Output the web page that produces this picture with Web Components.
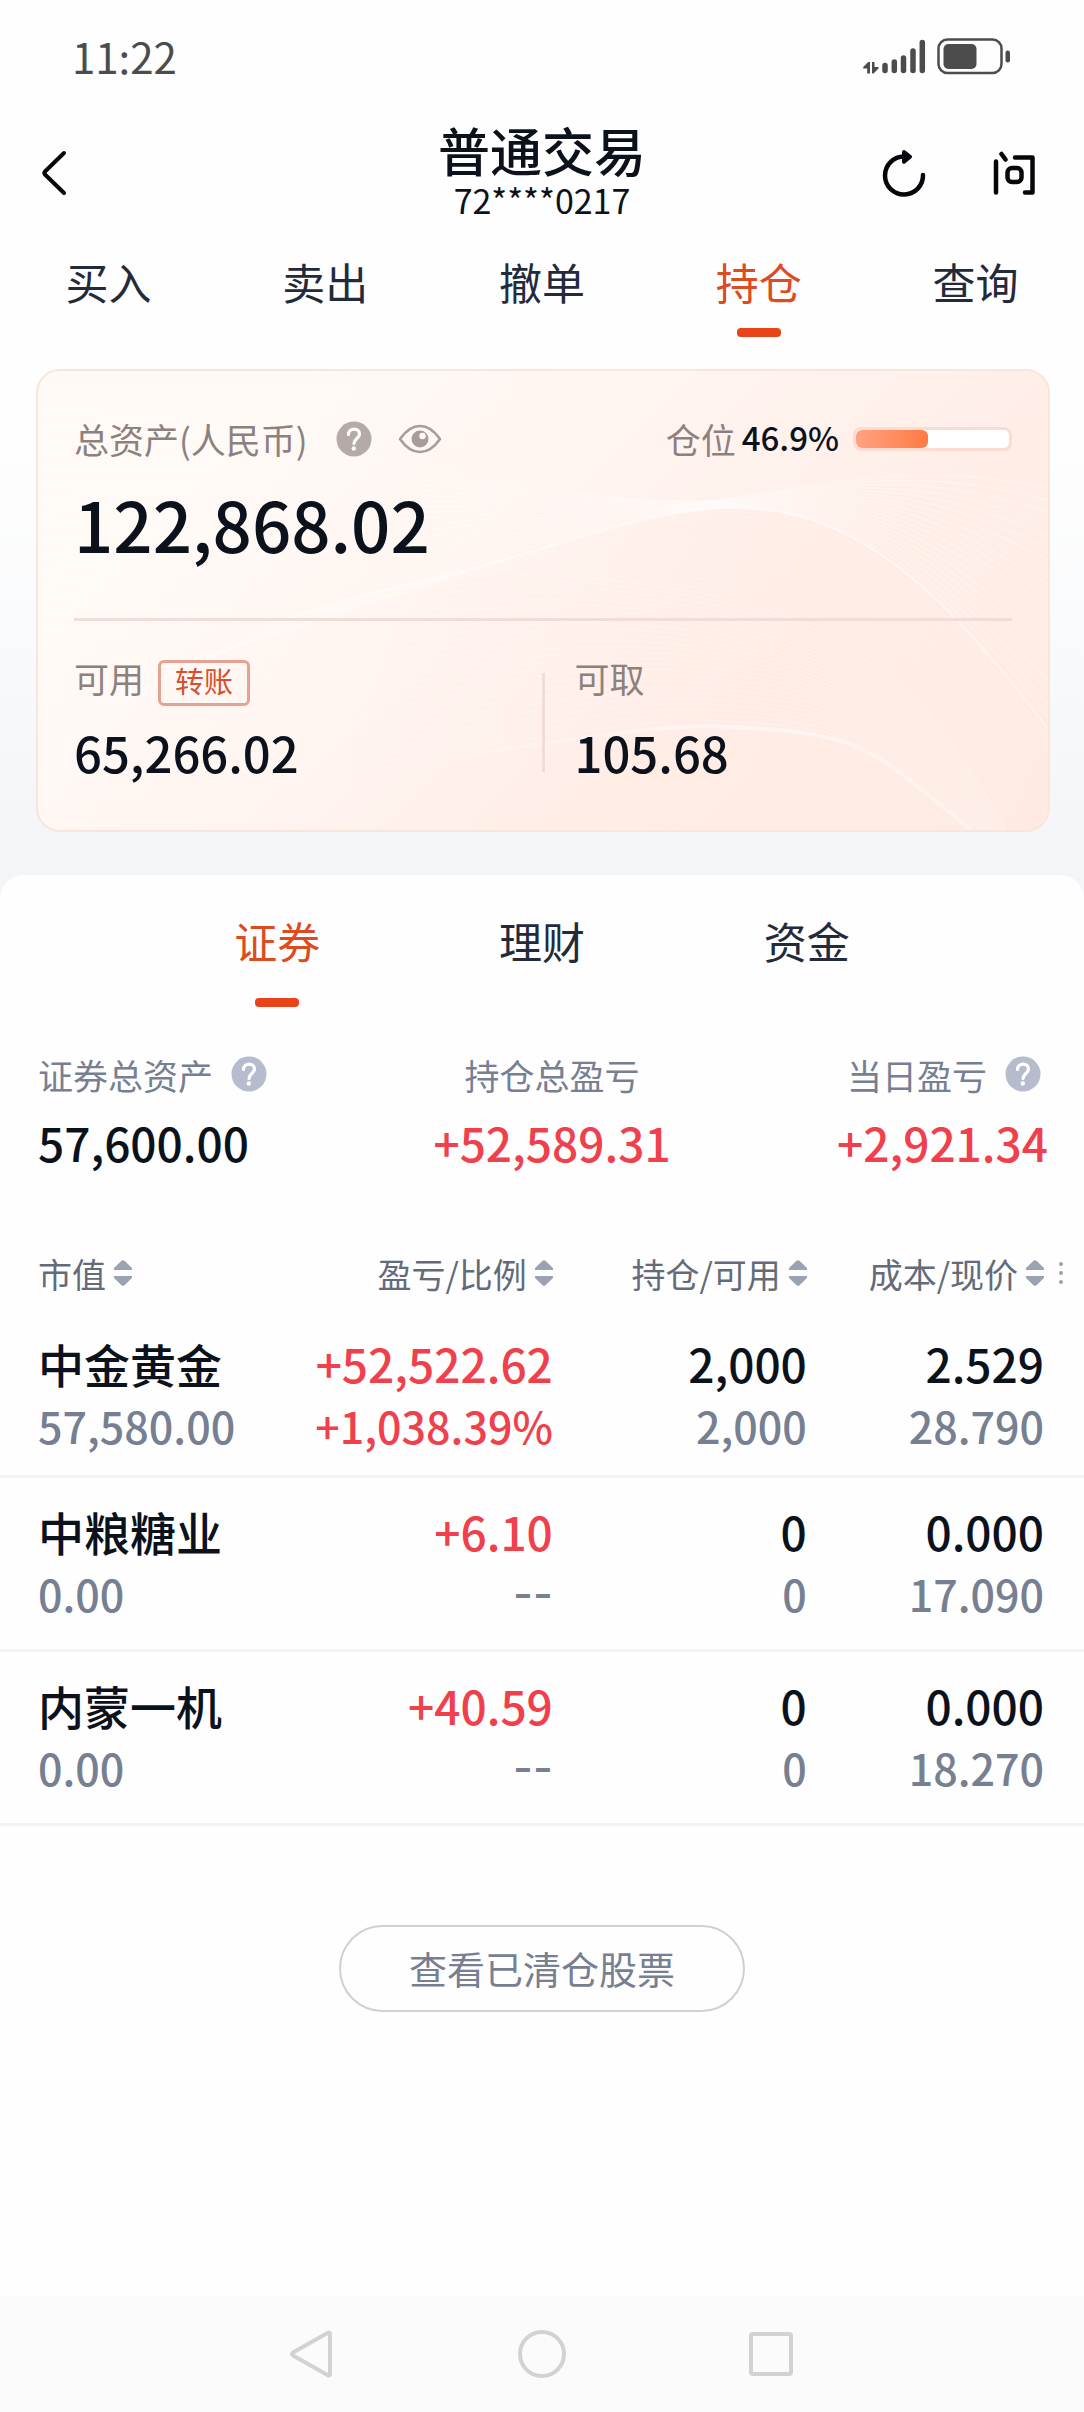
<!DOCTYPE html>
<html lang="zh-CN">
<head>
<meta charset="UTF-8">
<meta name="viewport" content="width=device-width, initial-scale=1">
<title>普通交易</title>
<style>
  body {
    margin: 0;
    font-family: "Noto Sans CJK SC", "Noto Sans", sans-serif;
    color: #0c121c;
    background: #fefefe;
    --accent: #e9431a;
    --accent-text: #dc4b22;
    --rise: #ef404c;
    --muted: #777f92;
  }
</style>
</head>
<body>
<trade-page>
  <status-bar time="11:22"></status-bar>
  <page-header account="72****0217">普通交易</page-header>
  <tab-bar class="main" tabs="买入,卖出,撤单,持仓,查询" active="持仓"></tab-bar>
  <asset-card total="122,868.02" available="65,266.02" withdrawable="105.68" position="46.9"></asset-card>
  <holdings-panel slot="panel">
    <tab-bar class="sub" tabs="证券,理财,资金" active="证券"></tab-bar>
    <asset-summary></asset-summary>
    <holdings-table></holdings-table>
    <pill-button>查看已清仓股票</pill-button>
  </holdings-panel>
  <system-nav slot="nav"></system-nav>
</trade-page>

<script>
class TradePage extends HTMLElement {
  constructor() {
    super();
    this.attachShadow({ mode: "open" });
  }

  connectedCallback() {
    this.shadowRoot.innerHTML = `
    <style>
      :host {
        display: flex;
        flex-direction: column;
        min-height: 100vh;
        background: linear-gradient(#fefefe 440px, #fafbfc 600px, #f4f5f9 840px);
      }

      main {
        flex: 1;
        display: flex;
        flex-direction: column;
      }
    </style>
    <slot></slot>
    <main><slot name="panel"></slot></main>
    <slot name="nav"></slot>
    `;
  }
}

class StatusBar extends HTMLElement {
  constructor() {
    super();
    this.attachShadow({ mode: "open" });
  }

  connectedCallback() {
    this.shadowRoot.innerHTML = `
    <style>
      :host {
        display: flex;
        align-items: center;
        justify-content: space-between;
        height: 111px;
        padding: 0 72px;
        color: #4c4c4c;
        font-size: 42px;
      }

      svg {
        display: block;
      }
    </style>
    <span>${this.getAttribute("time")}</span>
    <svg width="150" height="38" viewBox="862 36 150 38" fill="#4c4c4c" aria-hidden="true">
      <path d="M870 61v11.500h-2.800v-5h-4v-1.500l5-5zM872 61h2.500v5h4v1.500l-5 5H872z"/>
      <g stroke="#4c4c4c" stroke-width="5.500" stroke-linecap="round">
        <path d="M885 64.500v5M894.300 61v8.500M903.500 57v12.500M913 50v19.500M922.300 41.500v28"/>
      </g>
      <rect x="938.500" y="38.500" width="63" height="33.500" rx="9" fill="none" stroke="#4c4c4c" stroke-width="2.500"/>
      <rect x="943.500" y="43" width="33" height="25" rx="5"/>
      <rect x="1005.500" y="49.500" width="4.500" height="12" rx="2.200"/>
    </svg>
    `;
  }
}

class PageHeader extends HTMLElement {
  constructor() {
    super();
    this.attachShadow({ mode: "open" });
  }

  connectedCallback() {
    this.shadowRoot.innerHTML = `
    <style>
      :host {
        display: grid;
        grid-template-columns: 1fr auto 1fr;
        align-items: center;
        padding: 0 40px;
      }

      .title {
        padding: 7px 0 17px;
        text-align: center;
      }

      h1 {
        margin: 0;
        font-size: 52px;
        font-weight: 500;
        line-height: 64px;
      }

      p {
        margin: 0;
        font-size: 34px;
        line-height: 35px;
      }

      .actions {
        display: flex;
        justify-content: flex-end;
        gap: 64px;
        padding-right: 7px;
      }

      button {
        justify-self: start;
        padding: 0;
        border: 0;
        background: none;
      }

      svg {
        display: block;
        fill: none;
        stroke: #05070b;
        stroke-linecap: round;
        stroke-linejoin: round;
      }
    </style>
    <button aria-label="返回">
      <svg width="28" height="46" viewBox="0 0 28 46" stroke-width="4"><path d="M24 3L5 21.500q-1.500 1.500 0 3L24 43"/></svg>
    </button>
    <div class="title">
      <h1><slot></slot></h1>
      <p>${this.getAttribute("account")}</p>
    </div>
    <div class="actions">
      <button aria-label="刷新">
        <svg width="46" height="48" viewBox="881 149 46 48">
          <path d="M923 175A19 19 0 1 1 904 156.500" stroke-width="4.500"/>
          <path d="M904 152l6 4.700-6 5z" stroke-width="4" fill="#05070b"/>
        </svg>
      </button>
      <button aria-label="问答">
        <svg width="46" height="48" viewBox="991 149 46 48" stroke-width="4.500">
          <path d="M996 161.500v31M1001.500 154l4 5.500M1015 157.500h17.500v35h-7.500"/>
          <rect x="1007.500" y="168" width="14" height="14" rx="4.500"/>
        </svg>
      </button>
    </div>
    `;
  }
}

class TabBar extends HTMLElement {
  constructor() {
    super();
    this.attachShadow({ mode: "open" });
  }

  connectedCallback() {
    const active = this.getAttribute("active");
    const tabs = this.getAttribute("tabs").split(",");
    this.shadowRoot.innerHTML = `
    <style>
      :host {
        display: block;
      }

      nav {
        display: flex;
      }

      :host(.main) nav {
        padding: 19px 0 32px;
      }

      :host(.sub) nav {
        padding: 37px 145px 47px;
      }

      button {
        flex: 1;
        display: flex;
        flex-direction: column;
        align-items: center;
        gap: 19px;
        padding: 0;
        border: 0;
        background: none;
        color: #232b3b;
        font: inherit;
        font-size: 43px;
        line-height: 56px;
      }

      :host(.sub) button {
        gap: 30px;
      }

      button::after {
        content: "";
        width: 44px;
        height: 9px;
        border-radius: 4px;
      }

      button[aria-current] {
        color: var(--accent-text);
      }

      button[aria-current]::after {
        background: var(--accent);
      }
    </style>
    <nav>
      ${tabs.map((tab) => `<button${tab === active ? ' aria-current="page"' : ""}>${tab}</button>`).join("")}
    </nav>
    `;
  }
}

class HelpIcon extends HTMLElement {
  constructor() {
    super();
    this.attachShadow({ mode: "open" });
  }

  connectedCallback() {
    this.shadowRoot.innerHTML = `
    <style>
      :host {
        display: block;
        color: #b6bbcd;
      }

      button {
        display: block;
        padding: 0;
        border: 0;
        background: none;
        color: inherit;
      }

      svg {
        display: block;
      }
    </style>
    <button aria-label="说明">
      <svg width="36" height="36" viewBox="0 0 36 36">
        <circle cx="18" cy="18" r="17.500" fill="currentColor"/>
        <path d="M12.500 13.500c0-7 11-7 11-.5 0 4.500-5.500 4.500-5.500 9.500" fill="none" stroke="#fff" stroke-width="3.200" stroke-linecap="round"/>
        <circle cx="17.800" cy="27.500" r="2.200" fill="#fff"/>
      </svg>
    </button>
    `;
  }
}

class AssetCard extends HTMLElement {
  constructor() {
    super();
    this.attachShadow({ mode: "open" });
  }

  // Blend two cubic waves step by step into a family of fine lines
  waves(from, to, count) {
    let d = "";
    for (let i = 0; i <= count; i++) {
      const p = from.map((v, k) => Math.round((v + (to[k] - v) * (i / count)) * 10) / 10);
      d += `M${p[0]} ${p[1]}C${p.slice(2, 8).join(" ")}S${p.slice(8).join(" ")}`;
    }
    return d;
  }

  connectedCallback() {
    const ridge = [0, 335, 430, 215, 580, 138, 698, 138, 900, 210, 1014, 361];
    const crest = [0, 40, 300, 60, 560, 150, 698, 128, 900, 95, 1014, 118];
    const low = [0, 400, 250, 190, 470, 195, 610, 215, 870, 270, 972, 463];
    const base = [0, 440, 380, 410, 570, 352, 698, 359, 830, 375, 936, 463];
    this.shadowRoot.innerHTML = `
    <style>
      :host {
        display: block;
        margin: 0 34px 43px 36px;
      }

      .card {
        position: relative;
        overflow: hidden;
        padding: 46px 36px 48px;
        border: 2px solid #fae5dd;
        border-radius: 24px;
        background: linear-gradient(135deg, #fffaf6 18%, #fff4f0 46%, #ffeee7 70%, #feeae3);
      }

      .waves {
        position: absolute;
        inset: 0;
        width: 100%;
        height: 100%;
      }

      .content {
        position: relative;
      }

      .row {
        display: flex;
        align-items: center;
        height: 44px;
      }

      .label {
        color: #8d817e;
        font-size: 35px;
        line-height: 36px;
      }

      help-icon {
        margin: 0 26px 0 28px;
        color: #b5aaa8;
      }

      .eye {
        padding: 0;
        border: 0;
        background: none;
      }

      svg {
        display: block;
      }

      .position {
        display: flex;
        align-items: center;
        margin-left: auto;
      }

      .position .label {
        margin-right: 6px;
      }

      .percent {
        padding-bottom: 4px;
        font-size: 33px;
        font-weight: 500;
      }

      .meter {
        box-sizing: border-box;
        width: 159px;
        height: 24px;
        margin-left: 14px;
        border: 3px solid #fbdcd3;
        border-radius: 8px;
        background: #fff;
      }

      .meter div {
        height: 100%;
        border-radius: 6px;
        background: linear-gradient(90deg, #ffa281, #ff7a43);
      }

      .total {
        margin: 18px 0 51px;
        font-size: 69px;
        font-weight: 500;
        line-height: 88px;
      }

      .split {
        display: grid;
        grid-template-columns: 1fr 3px 1fr;
        padding-top: 39px;
        border-top: 3px solid #f1dcd9;
      }

      .rule {
        margin: 13px 0 10px;
        background: #f3dcd8;
      }

      .cell:last-child {
        padding-left: 30px;
      }

      .head {
        display: flex;
        align-items: flex-start;
        gap: 14px;
        height: 46px;
        margin-bottom: 16px;
      }

      .transfer {
        box-sizing: border-box;
        width: 92px;
        height: 46px;
        padding: 0 0 5px;
        border: 3px solid #e5a191;
        border-radius: 6px;
        background: none;
        color: #d5502c;
        font: inherit;
        font-size: 29px;
        line-height: 35px;
      }

      .value {
        font-size: 49px;
        font-weight: 500;
        line-height: 60px;
      }
    </style>
    <div class="card">
      <svg class="waves" viewBox="0 0 1014 463" preserveAspectRatio="none" fill="none" stroke="#fff" aria-hidden="true">
        <defs>
          <linearGradient id="shade" x1="0" x2="1">
            <stop offset=".3" stop-color="#ffebe3" stop-opacity="0"/>
            <stop offset=".75" stop-color="#ffebe3" stop-opacity=".5"/>
          </linearGradient>
          <linearGradient id="glow" gradientUnits="userSpaceOnUse" x1="400" y1="0" x2="1014" y2="0">
            <stop offset="0" stop-color="#fff" stop-opacity="0"/>
            <stop offset=".5" stop-color="#fff" stop-opacity=".45"/>
            <stop offset="1" stop-color="#fff" stop-opacity=".2"/>
          </linearGradient>
        </defs>
        <path d="M0 335C430 215 580 138 698 138S900 210 1014 361V463H0z" fill="url(#shade)" stroke="none"/>
        <path d="${this.waves(ridge, crest, 20)}" stroke-opacity=".4"/>
        <path d="${this.waves(low, base, 26)}" stroke-opacity=".28"/>
        <path d="${this.waves(ridge, low, 20)}" stroke-opacity=".15"/>
        <path d="M0 335C430 215 580 138 698 138S900 210 1014 361" stroke="url(#glow)" stroke-width="3"/>
        <path d="M0 440C380 410 570 352 698 359S830 375 936 463" stroke="url(#glow)" stroke-width="4"/>
      </svg>
      <div class="content">
        <div class="row">
          <span class="label">总资产(人民币)</span>
          <help-icon></help-icon>
          <button class="eye" aria-label="隐藏金额">
            <svg width="44" height="30" viewBox="0 0 44 30">
              <path d="M2 15Q11 2 22 2t20 13Q33 28 22 28T2 15z" fill="none" stroke="#a89d9b" stroke-width="2.600" stroke-linejoin="round"/>
              <circle cx="22" cy="15" r="8.500" fill="#a89d9b"/>
              <circle cx="24.500" cy="12" r="3.200" fill="#fff8f4"/>
            </svg>
          </button>
          <div class="position">
            <span class="label">仓位</span>
            <span class="percent">${this.getAttribute("position")}%</span>
            <div class="meter"><div style="width: ${this.getAttribute("position")}%"></div></div>
          </div>
        </div>
        <div class="total">${this.getAttribute("total")}</div>
        <div class="split">
          <div class="cell">
            <div class="head"><span class="label">可用</span><button class="transfer">转账</button></div>
            <div class="value">${this.getAttribute("available")}</div>
          </div>
          <div class="rule"></div>
          <div class="cell">
            <div class="head"><span class="label">可取</span></div>
            <div class="value">${this.getAttribute("withdrawable")}</div>
          </div>
        </div>
      </div>
    </div>
    `;
  }
}

class HoldingsPanel extends HTMLElement {
  constructor() {
    super();
    this.attachShadow({ mode: "open" });
  }

  connectedCallback() {
    this.shadowRoot.innerHTML = `
    <style>
      :host {
        flex: 1;
        display: block;
        padding-bottom: 99px;
        border-radius: 24px 24px 0 0;
        background: #fefefe;
      }
    </style>
    <slot></slot>
    `;
  }
}

class AssetSummary extends HTMLElement {
  constructor() {
    super();
    this.attachShadow({ mode: "open" });
  }

  connectedCallback() {
    this.shadowRoot.innerHTML = `
    <style>
      :host {
        display: flex;
        justify-content: space-between;
        padding: 0 36px 81px 38px;
      }

      .center {
        text-align: center;
      }

      .right {
        text-align: right;
      }

      .label {
        display: flex;
        align-items: center;
        gap: 18px;
        height: 40px;
        margin-bottom: 18px;
        color: var(--muted);
        font-size: 35px;
      }

      .center .label {
        justify-content: center;
      }

      .right .label {
        justify-content: flex-end;
        padding-right: 7px;
      }

      .value {
        font-size: 46px;
        font-weight: 500;
        line-height: 60px;
      }

      .rise {
        color: var(--rise);
      }
    </style>
    <div class="item">
      <div class="label">证券总资产<help-icon></help-icon></div>
      <div class="value">57,600.00</div>
    </div>
    <div class="item center">
      <div class="label">持仓总盈亏</div>
      <div class="value rise">+52,589.31</div>
    </div>
    <div class="item right">
      <div class="label">当日盈亏<help-icon></help-icon></div>
      <div class="value rise">+2,921.34</div>
    </div>
    `;
  }
}

class HoldingsTable extends HTMLElement {
  constructor() {
    super();
    this.attachShadow({ mode: "open" });
  }

  connectedCallback() {
    const columns = ["市值", "盈亏/比例", "持仓/可用", "成本/现价"];
    const rows = [
      [["中金黄金", "57,580.00"], ["+52,522.62", "+1,038.39%"], ["2,000", "2,000"], ["2.529", "28.790"]],
      [["中粮糖业", "0.00"], ["+6.10", "--"], ["0", "0"], ["0.000", "17.090"]],
      [["内蒙一机", "0.00"], ["+40.59", "--"], ["0", "0"], ["0.000", "18.270"]],
    ];
    const arrows = `<svg width="18" height="26" viewBox="0 0 18 26" fill="#9ba2b2" aria-hidden="true"><path d="M7.500.8q1.500-1.300 3 0L18 8v2H0V8zM0 16h18v2l-7.500 7.200q-1.500 1.300-3 0L0 18z"/></svg>`;
    const tone = (text) => (text[0] === "+" ? " rise" : text === "--" ? " none" : "");
    const cell = ([top, bottom]) => `
      <td>
        <div class="top${tone(top)}">${top}</div>
        <div class="bottom${tone(bottom)}">${bottom}</div>
      </td>`;
    this.shadowRoot.innerHTML = `
    <style>
      :host {
        display: block;
      }

      table {
        width: 100%;
        table-layout: fixed;
        border-collapse: separate;
        border-spacing: 0;
        text-align: right;
      }

      col:nth-child(1) { width: 25%; }
      col:nth-child(2) { width: 26%; }
      col:nth-child(3) { width: 254px; }
      col:nth-child(5) { width: 40px; }

      th, td {
        padding: 0;
        white-space: nowrap;
      }

      th {
        padding-bottom: 39px;
        font-weight: 400;
      }

      th:first-child, td:first-child {
        padding-left: 38px;
        text-align: left;
      }

      th button {
        display: inline-flex;
        align-items: center;
        gap: 8px;
        height: 40px;
        padding: 0;
        border: 0;
        background: none;
        color: #636b7b;
        font: inherit;
        font-size: 34px;
        vertical-align: top;
      }

      svg {
        display: block;
      }

      td {
        padding-top: 22px;
        padding-bottom: 25px;
        border-bottom: 3px solid #f3f3f4;
      }

      tbody tr:first-child td {
        padding-top: 0;
        padding-bottom: 19px;
      }

      .top {
        font-size: 46px;
        font-weight: 500;
        line-height: 62px;
      }

      .bottom {
        color: var(--muted);
        font-size: 43px;
        font-weight: 500;
        line-height: 62px;
      }

      .rise {
        color: var(--rise);
      }

      .none {
        font-family: Inter, sans-serif;
      }
    </style>
    <table>
      <colgroup><col><col><col><col><col></colgroup>
      <thead>
        <tr>
          ${columns.map((name) => `<th scope="col"><button>${name}${arrows}</button></th>`).join("")}
          <th>
            <button aria-label="更多列">
              <svg width="26" height="22" viewBox="0 0 26 22" fill="#9ba2b2"><circle cx="3" cy="2" r="2"/><circle cx="3" cy="11" r="2"/><circle cx="3" cy="20" r="2"/></svg>
            </button>
          </th>
        </tr>
      </thead>
      <tbody>
        ${rows.map((row) => `<tr>${row.map(cell).join("")}<td></td></tr>`).join("")}
      </tbody>
    </table>
    `;
  }
}

class PillButton extends HTMLElement {
  constructor() {
    super();
    this.attachShadow({ mode: "open" });
  }

  connectedCallback() {
    this.shadowRoot.innerHTML = `
    <style>
      :host {
        display: flex;
        justify-content: center;
        margin-top: 99px;
      }

      button {
        height: 87px;
        padding: 0 68px 2px;
        border: 2px solid #cdd0d6;
        border-radius: 44px;
        background: none;
        color: var(--muted);
        font: inherit;
        font-size: 38px;
      }
    </style>
    <button><slot></slot></button>
    `;
  }
}

class SystemNav extends HTMLElement {
  constructor() {
    super();
    this.attachShadow({ mode: "open" });
  }

  connectedCallback() {
    this.shadowRoot.innerHTML = `
    <style>
      :host {
        display: flex;
        align-items: center;
        justify-content: center;
        gap: 180px;
        height: 116px;
        background: #fbfbfb;
      }

      button {
        padding: 0;
        border: 0;
        background: none;
      }

      svg {
        display: block;
        fill: none;
        stroke: #d2d2d2;
        stroke-width: 4;
        stroke-linejoin: round;
      }
    </style>
    <button aria-label="返回"><svg width="50" height="50" viewBox="0 0 50 50"><path d="M40.500 4Q43 2.500 43 5V45Q43 47.500 40.500 46L6 26.500Q4 25 6 23.500z"/></svg></button>
    <button aria-label="主屏幕"><svg width="50" height="50" viewBox="0 0 50 50"><circle cx="25" cy="25" r="22"/></svg></button>
    <button aria-label="最近任务"><svg width="50" height="50" viewBox="0 0 50 50"><rect x="4" y="5" width="40" height="40" rx="2"/></svg></button>
    `;
  }
}

customElements.define("help-icon", HelpIcon);
customElements.define("trade-page", TradePage);
customElements.define("status-bar", StatusBar);
customElements.define("page-header", PageHeader);
customElements.define("tab-bar", TabBar);
customElements.define("asset-card", AssetCard);
customElements.define("holdings-panel", HoldingsPanel);
customElements.define("asset-summary", AssetSummary);
customElements.define("holdings-table", HoldingsTable);
customElements.define("pill-button", PillButton);
customElements.define("system-nav", SystemNav);
</script>
</body>
</html>
